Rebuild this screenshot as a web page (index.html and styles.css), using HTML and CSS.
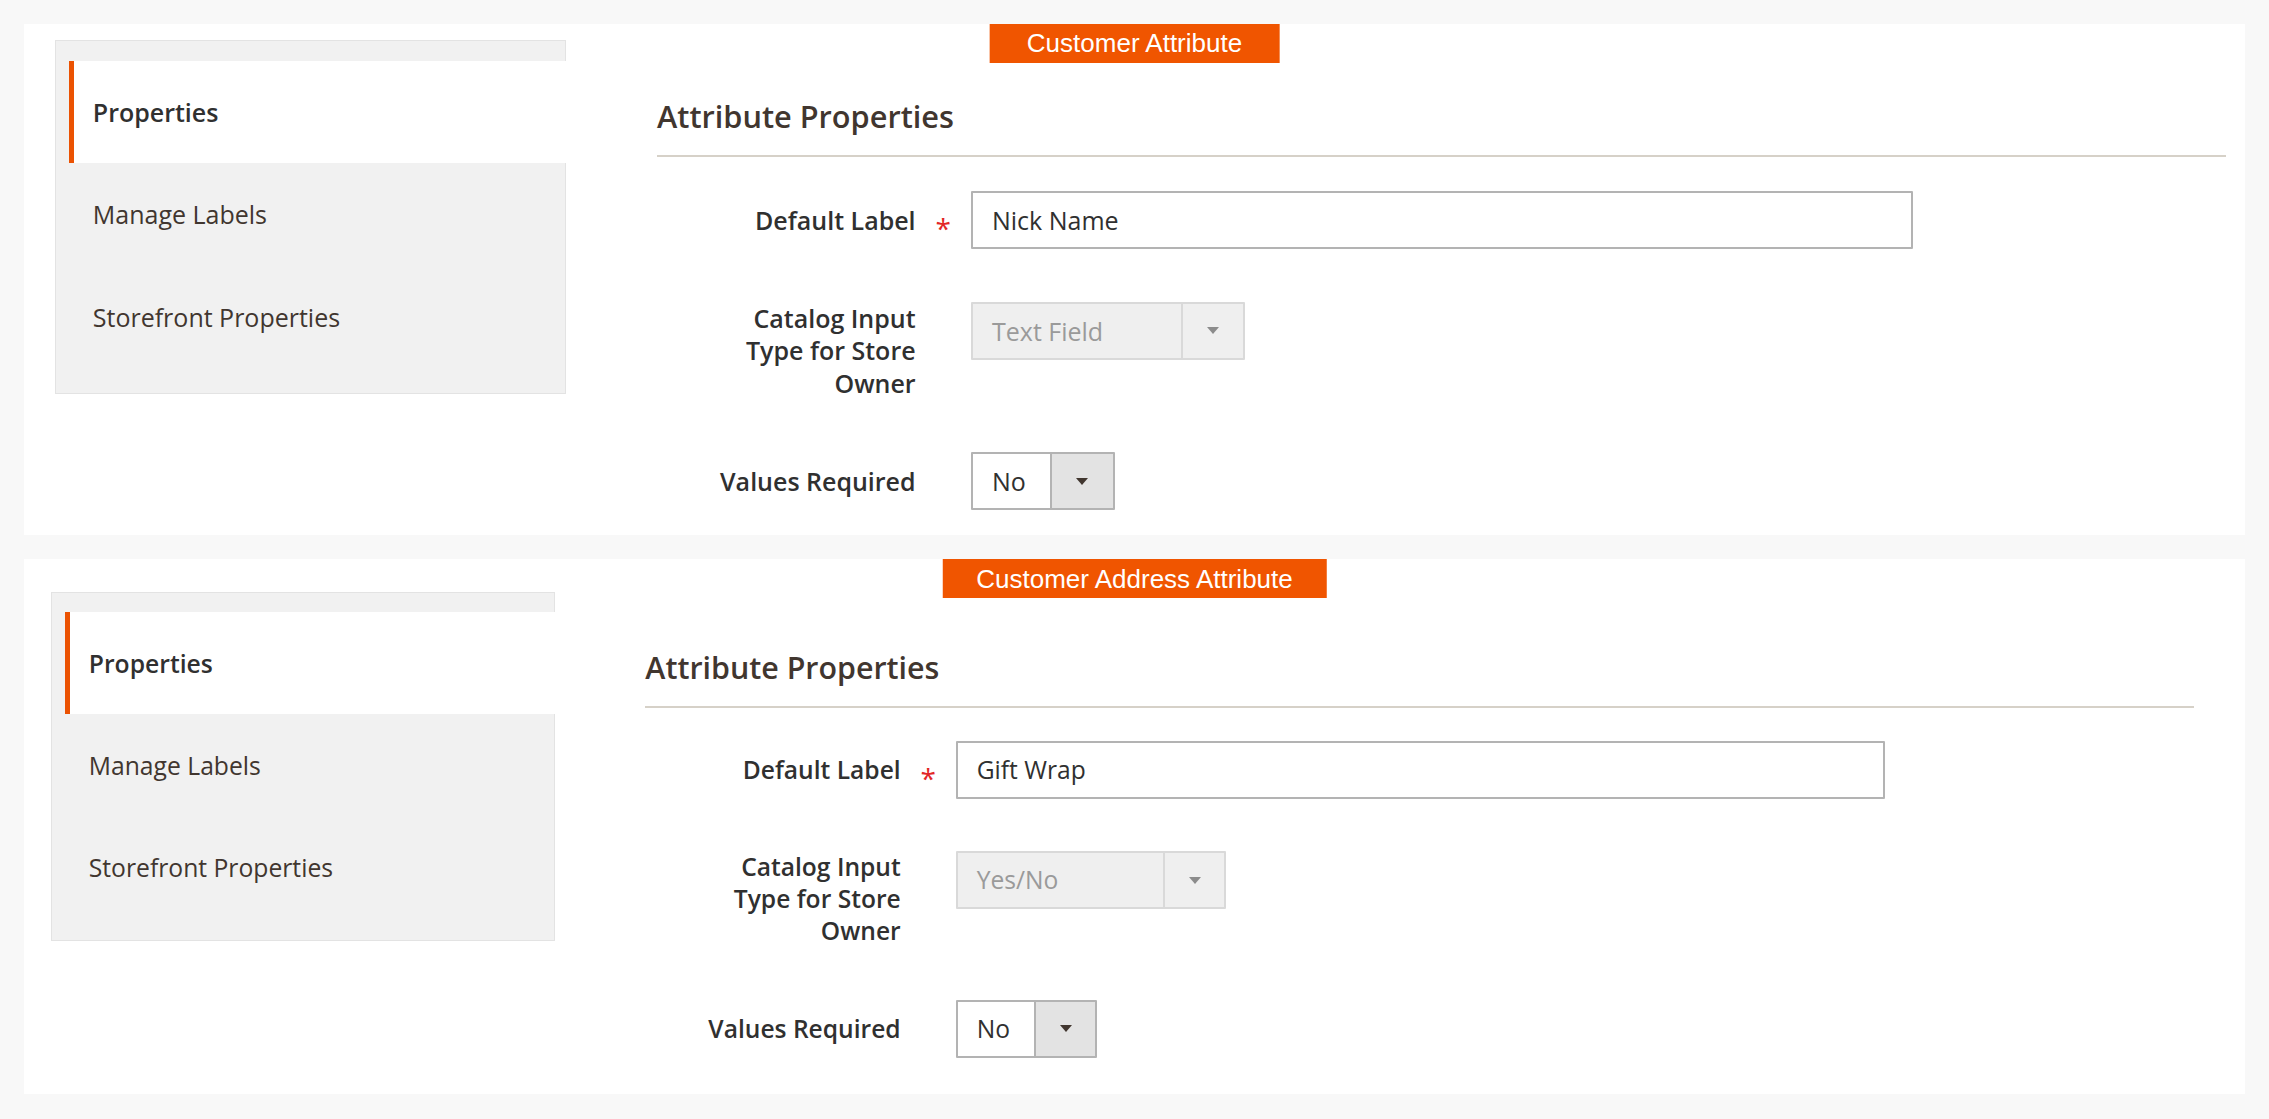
FILE: index.html
```html
<!DOCTYPE html>
<html lang="en">
<head>
<meta charset="utf-8">
<title>Attribute Properties</title>
<link rel="stylesheet" href="styles.css">
</head>
<body>
<div class="page">
  <section class="panel panel--customer">
    <div class="badge">Customer Attribute</div>
    <nav class="tabs">
      <div class="tab tab--active">Properties</div>
      <div class="tab">Manage Labels</div>
      <div class="tab">Storefront Properties</div>
    </nav>
    <div class="main">
      <h2 class="title">Attribute Properties</h2>
      <div class="form">
        <div class="field">
          <label class="label">Default Label</label>
          <span class="mark">*</span>
          <input class="input" type="text" value="Nick Name" readonly>
        </div>
        <div class="field field--top">
          <label class="label">Catalog Input<br>Type for Store<br>Owner</label>
          <span class="mark"></span>
          <div class="select select--disabled select--type"><span class="select-value">Text Field</span><span class="select-arrow"></span></div>
        </div>
        <div class="field">
          <label class="label">Values Required</label>
          <span class="mark"></span>
          <div class="select select--short"><span class="select-value">No</span><span class="select-arrow"></span></div>
        </div>
      </div>
    </div>
  </section>

  <section class="panel panel--address">
    <div class="badge">Customer Address Attribute</div>
    <nav class="tabs">
      <div class="tab tab--active">Properties</div>
      <div class="tab">Manage Labels</div>
      <div class="tab">Storefront Properties</div>
    </nav>
    <div class="main">
      <h2 class="title">Attribute Properties</h2>
      <div class="form">
        <div class="field">
          <label class="label">Default Label</label>
          <span class="mark">*</span>
          <input class="input" type="text" value="Gift Wrap" readonly>
        </div>
        <div class="field field--top">
          <label class="label">Catalog Input<br>Type for Store<br>Owner</label>
          <span class="mark"></span>
          <div class="select select--disabled select--type"><span class="select-value">Yes/No</span><span class="select-arrow"></span></div>
        </div>
        <div class="field">
          <label class="label">Values Required</label>
          <span class="mark"></span>
          <div class="select select--short"><span class="select-value">No</span><span class="select-arrow"></span></div>
        </div>
      </div>
    </div>
  </section>
</div>
</body>
</html>
```

FILE: styles.css
```css
* { box-sizing: border-box; }

html, body {
  margin: 0;
  padding: 0;
  background: #f8f8f8;
  font-family: "Open Sans", "Noto Sans", sans-serif;
  color: #303030;
}

.page {
  display: flex;
  flex-direction: column;
  gap: 24px;
  padding: 24px 24px 25px;
}

.panel {
  position: relative;
  display: flex;
  align-items: flex-start;
  background: #ffffff;
}

.panel--customer { padding: 16.4px 19px 24.3px 31px; }
.panel--address  { padding: 33.6px 51px 36px 27.3px; }

/* badge overlay */
.badge {
  position: absolute;
  top: 0;
  left: 50%;
  transform: translateX(-50%);
  background: #f05500;
  color: #ffffff;
  font-family: "Liberation Sans", Arial, sans-serif;
  font-size: 26px;
  white-space: nowrap;
  padding-top: 1px;
}
.panel--customer .badge { height: 38.5px; line-height: 37.5px; padding-left: 37.7px; padding-right: 37.7px; }
.panel--address .badge  { height: 39px; line-height: 38px; padding-left: 34px; padding-right: 34px; }

/* sidebar tabs */
.tabs {
  flex: none;
  background: #f1f1f1;
  border: 1px solid #e3e3e3;
}
.panel--customer .tabs { width: 511px; margin-right: 91px; padding: 19.3px 0 24.4px; }
.panel--address .tabs  { width: 504px; margin-right: 90px; padding: 18.8px 0 21.4px; }

.tab {
  display: flex;
  align-items: center;
  margin-right: -1px;
  padding-left: 18.8px;
  border-left: 5.5px solid transparent;
  font-size: 25px;
  color: #41362f;
}
.panel--customer .tab { height: 102.5px; margin-left: 13px; }
.panel--address .tab  { height: 102.3px; margin-left: 12.7px; font-size: 24.7px; }

.tab--active {
  background: #ffffff;
  border-left-color: #eb5202;
  font-weight: 600;
  color: #303030;
}

/* main content */
.main { flex: 1; min-width: 0; }
.panel--customer .main { padding-top: 55.6px; }
.panel--address .main  { padding-top: 55.1px; }

.title {
  margin: 0;
  font-size: 30.7px;
  line-height: 41px;
  font-weight: 600;
  color: #41362f;
  padding-bottom: 18.4px;
  border-bottom: 2px solid #d6d1c8;
}
.panel--address .title { padding-bottom: 17.8px; font-size: 30.4px; }

.form {
  display: flex;
  flex-direction: column;
}
.panel--customer .form { margin-top: 33.6px; gap: 53px; }
.panel--address .form  { margin-top: 32.5px; gap: 52.5px; }

.field {
  display: flex;
  align-items: center;
}
.field--top { align-items: flex-start; }

.label {
  flex: none;
  text-align: right;
  font-size: 25px;
  font-weight: 600;
  line-height: 32.5px;
  color: #303030;
}
.panel--customer .label { width: 258.6px; }
.panel--address .label  { width: 255.4px; font-size: 24.6px; line-height: 32px; }

.mark {
  flex: none;
  display: flex;
  justify-content: center;
  color: #e22626;
  font-size: 28px;
  line-height: 1;
  padding-top: 16px;
}
.panel--customer .mark { width: 55.4px; }
.panel--address .mark  { width: 55px; }

.input {
  display: block;
  height: 58px;
  margin: 0;
  padding: 0 19px;
  border: 2px solid #b3b3b3;
  border-radius: 1px;
  background: #ffffff;
  font-family: "Open Sans", "Noto Sans", sans-serif;
  font-size: 25px;
  color: #303030;
  outline: none;
}
.panel--customer .input { width: 942px; }
.panel--address .input  { width: 929px; font-size: 24.6px; }

.select {
  display: flex;
  height: 58px;
  border: 2px solid #b3b3b3;
  border-radius: 1px;
  background: #ffffff;
}
.select-value {
  flex: 1;
  padding-left: 19px;
  font-size: 25px;
  line-height: 54px;
  color: #303030;
  white-space: nowrap;
}
.select-arrow {
  flex: none;
  display: flex;
  align-items: center;
  justify-content: center;
  border-left: 2px solid #b3b3b3;
  background: #e3e3e3;
}
.select-arrow::after {
  content: "";
  width: 0;
  height: 0;
  border-left: 6px solid transparent;
  border-right: 6px solid transparent;
  border-top: 7px solid #41362f;
}

.panel--customer .select-arrow { width: 62.5px; }
.panel--address .select-arrow  { width: 61px; }
.panel--customer .select--type  { width: 274.5px; }
.panel--address .select--type   { width: 270.6px; }
.panel--customer .select--short { width: 143.7px; }
.panel--address .select--short  { width: 141.6px; }
.panel--address .select-value { font-size: 24.6px; }

.select--disabled {
  background: #efefef;
  border-color: #d9d9d9;
}
.select--disabled .select-value { color: #9a9a9a; }
.select--disabled .select-arrow {
  background: #efefef;
  border-left-color: #d9d9d9;
}
.select--disabled .select-arrow::after { border-top-color: #8c8c8c; }
```
